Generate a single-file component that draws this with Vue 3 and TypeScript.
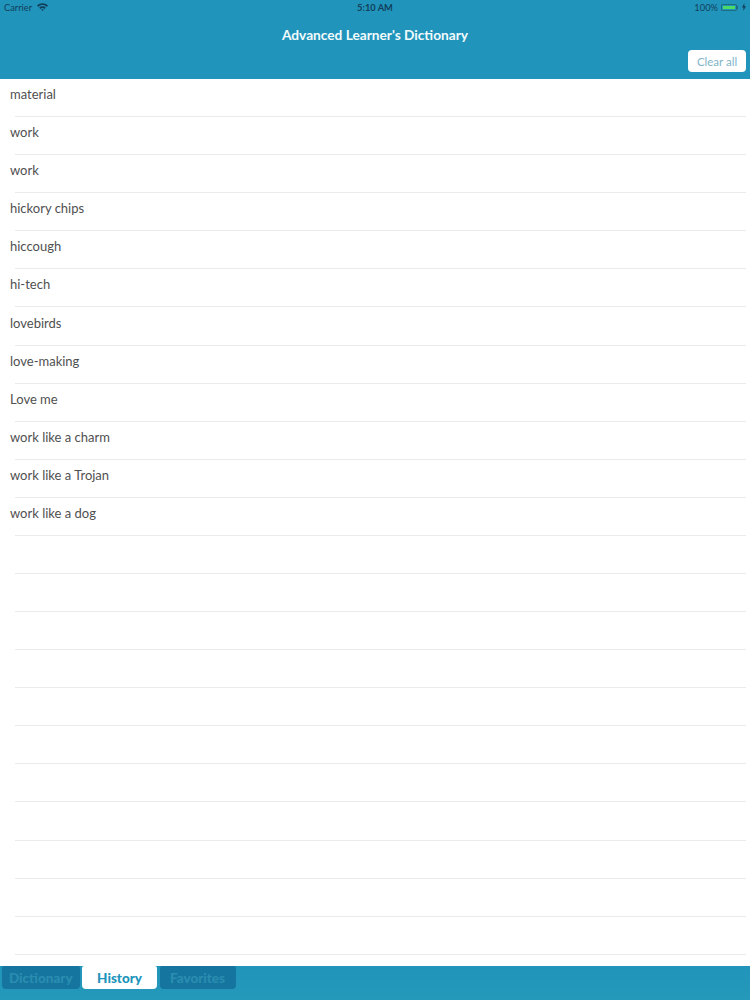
<script setup lang="ts">
const words: string[] = [
  "material",
  "work",
  "work",
  "hickory chips",
  "hiccough",
  "hi-tech",
  "lovebirds",
  "love-making",
  "Love me",
  "work like a charm",
  "work like a Trojan",
  "work like a dog",
];
const rows: string[] = [...words, ...Array<string>(11).fill("")];
const tabs = [
  { name: "Dictionary", active: false },
  { name: "History", active: true },
  { name: "Favorites", active: false },
];
</script>

<template>
  <div class="screen">
    <header class="header">
      <div class="status">
        <div class="status-left">
          <span>Carrier</span>
          <svg class="wifi" width="11" height="8" viewBox="0 0 11 8">
            <path d="M0 2.6C3 -.6 8 -.6 11 2.6L9.7 3.9C7.3 1.5 3.7 1.5 1.3 3.9Z" />
            <path d="M2.2 4.7C4 2.9 7 2.9 8.8 4.7L7.6 5.9C6.4 4.8 4.6 4.8 3.4 5.9Z" />
            <path d="M4.2 6.6C5 6 6 6 6.8 6.6L5.5 8Z" />
          </svg>
        </div>
        <span class="time">5:10 AM</span>
        <div class="status-right">
          <span>100%</span>
          <span class="battery"><span class="battery-fill"></span></span>
          <span class="battery-tip"></span>
          <svg class="bolt" width="4" height="8" viewBox="0 0 4 8">
            <path d="M2.4 0L0 4.5H1.6L1.2 8L4 3.2H2.3Z" />
          </svg>
        </div>
      </div>
      <h1 class="title">Advanced Learner's Dictionary</h1>
      <div class="actions">
        <button class="clear">Clear all</button>
      </div>
    </header>

    <main class="list">
      <div v-for="(word, i) in rows" :key="i" class="row">
        <span class="word">{{ word }}</span>
      </div>
    </main>

    <footer class="tabbar">
      <div
        v-for="tab in tabs"
        :key="tab.name"
        class="tab"
        :class="{ active: tab.active }"
      >
        {{ tab.name }}
      </div>
    </footer>
  </div>
</template>

<style>
html,
body {
  margin: 0;
  background: #fff;
}
</style>

<style scoped>
.screen {
  width: 750px;
  height: 1000px;
  display: flex;
  flex-direction: column;
  font-family: Lato, "Noto Sans", sans-serif;
  overflow: hidden;
  background: #fff;
}
.header {
  height: 79px;
  flex: none;
  box-sizing: border-box;
  background: #2194bb;
  display: flex;
  flex-direction: column;
}
.status {
  height: 14px;
  padding: 0 4px;
  display: grid;
  grid-template-columns: 1fr auto 1fr;
  align-items: center;
  font-size: 9.3px;
  color: #123f5c;
}
.status-left {
  display: flex;
  align-items: center;
  gap: 5px;
}
.wifi {
  fill: #123f5c;
}
.time {
  font-weight: 700;
}
.status-right {
  display: flex;
  align-items: center;
  justify-content: flex-end;
}
.battery {
  width: 16px;
  height: 7px;
  margin-left: 3px;
  padding: 1px;
  box-sizing: border-box;
  border: 1px solid #1c6d80;
  border-radius: 1px;
  display: flex;
}
.battery-fill {
  flex: 1;
  background: #4cd964;
}
.battery-tip {
  width: 1px;
  height: 3px;
  background: #1c6d80;
}
.bolt {
  margin-left: 4px;
  fill: #123f5c;
}
.title {
  margin: 13px 0 0;
  font-size: 13.7px;
  line-height: 16px;
  font-weight: 700;
  text-align: center;
  color: #f1fbfd;
}
.actions {
  margin-top: 7px;
  padding-right: 4px;
  display: flex;
  justify-content: flex-end;
}
.clear {
  width: 58px;
  height: 22px;
  padding: 0;
  border: 0;
  border-radius: 4px;
  background: #fff;
  color: #7fb4c8;
  font-family: inherit;
  font-size: 11.5px;
}
.list {
  flex: 1;
  min-height: 0;
}
.row {
  height: 38.08px;
  box-sizing: border-box;
  padding: 0 0 8px 10px;
  display: flex;
  align-items: center;
  position: relative;
  font-size: 13px;
  color: #505050;
}
.row::after {
  content: "";
  position: absolute;
  left: 15px;
  right: 4px;
  bottom: 0;
  height: 1px;
  background: #ebebeb;
}
.tabbar {
  height: 34px;
  flex: none;
  box-sizing: border-box;
  padding: 0 0 0 2px;
  display: grid;
  grid-template-columns: 77.5px 75px 76px;
  gap: 2.5px;
  align-items: start;
  background: linear-gradient(#2194bb, #2599b9);
}
.tab {
  height: 23px;
  display: flex;
  align-items: center;
  justify-content: center;
  border-radius: 2px 2px 4px 4px;
  background: #16759f;
  color: #2a8db0;
  font-size: 13.5px;
  font-weight: 900;
}
.tab.active {
  background: #fff;
  color: #2194bb;
}
</style>
